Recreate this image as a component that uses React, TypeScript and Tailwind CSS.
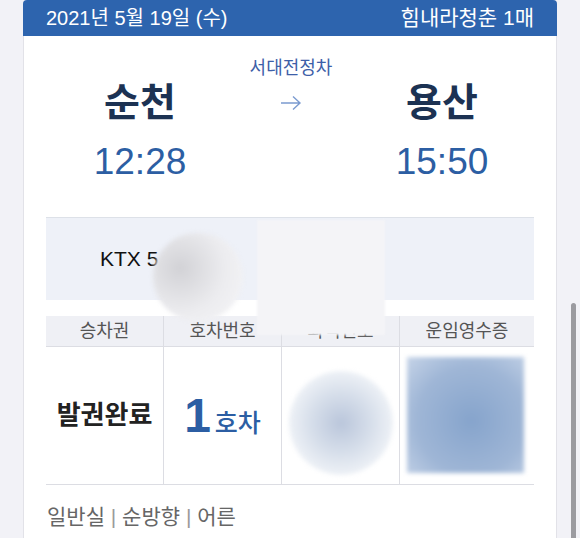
import { FC } from 'react';

const font = { fontFamily: '"Liberation Sans", "Noto Sans CJK KR", sans-serif' };

const App: FC = () => {
  return (
    <div
      className="relative h-[538px] w-[580px] overflow-hidden bg-[#f2f2f7]"
      style={font}
    >
      <div className="ml-[23px] h-[538px] w-[534px] rounded-t-[4px] border-x border-[#e2e2e8] bg-white">
        {/* date bar */}
        <div className="-mx-px flex h-[36px] items-center justify-between rounded-t-[4px] bg-[#2d64ae] px-[23px] text-[20px] text-white">
          <span>2021년 5월 19일 (수)</span>
          <span className="text-[21px]">힘내라청춘 1매</span>
        </div>

        {/* route */}
        <div className="pt-[20px]">
          <div className="flex justify-center pl-[2px]">
            <div className="w-[151px]" />
            <div className="w-[151px] text-center text-[18px] leading-[24px] text-[#3d60a8]">
              서대전정차
            </div>
            <div className="w-[151px]" />
          </div>
          <div className="flex justify-center pl-[2px]">
            <div className="w-[151px] text-center text-[39px] font-bold leading-[46px] text-[#1c3253]">
              순천
            </div>
            <div className="flex w-[151px] items-center justify-center">
              <svg width="22" height="16" viewBox="0 0 22 16" fill="none">
                <path
                  d="M1 8h19M13 1.5L20 8l-7 6.5"
                  stroke="#7b9bd0"
                  strokeWidth="1.4"
                />
              </svg>
            </div>
            <div className="w-[151px] text-center text-[39px] font-bold leading-[46px] text-[#1c3253]">
              용산
            </div>
          </div>
          <div className="mt-[16px] flex justify-center pl-[2px]">
            <div className="w-[151px] text-center text-[37px] leading-[40px] text-[#2c5ea3]">
              12:28
            </div>
            <div className="w-[151px]" />
            <div className="w-[151px] text-center text-[37px] leading-[40px] text-[#2c5ea3]">
              15:50
            </div>
          </div>
        </div>

        {/* train */}
        <div className="mx-[22px] mt-[35px] flex h-[83px] items-center border-t border-[#dde1e8] bg-[#eef1f8] pl-[54px] text-[21px] text-[#111]">
          KTX 5
        </div>

        {/* ticket table */}
        <div className="mx-[22px] mt-[16px]">
          <div className="grid h-[30px] grid-cols-[117px_118px_118px_1fr] bg-[#eff0f5] text-[18px] leading-[30px] text-[#555]">
            <div className="text-center">승차권</div>
            <div className="border-l border-[#dcdde3] text-center">호차번호</div>
            <div className="border-l border-[#dcdde3] text-center">좌석번호</div>
            <div className="border-l border-[#dcdde3] text-center">운임영수증</div>
          </div>
          <div className="grid h-[139px] grid-cols-[117px_118px_118px_1fr] border-y border-[#dcdde3]">
            <div className="flex items-center justify-center text-[26px] font-semibold text-[#222]">
              발권완료
            </div>
            <div className="flex items-center justify-center border-l border-[#dcdde3] text-[#2c5ea3]">
              <span className="flex items-baseline">
                <span className="text-[48px] font-bold leading-none">1</span>
                <span className="ml-[4px] text-[25px] font-medium leading-none">호차</span>
              </span>
            </div>
            <div className="border-l border-[#dcdde3]" />
            <div className="border-l border-[#dcdde3]" />
          </div>
        </div>

        <div className="mx-[23px] mt-[20px] text-[21px] leading-[24px] text-[#666]">
          일반실 <span className="text-[#9a9a9a]">|</span> 순방향{' '}
          <span className="text-[#9a9a9a]">|</span> 어른
        </div>
      </div>

      {/* privacy blurs */}
      <div className="absolute left-[153px] top-[233px] h-[88px] w-[90px] rounded-full bg-[radial-gradient(circle_at_30%_40%,#d2d2d6,#ececef_55%,#f6f6f8)] blur-[2px]" />
      <div className="absolute left-[257px] top-[220px] h-[115px] w-[128px] bg-[#f4f4f7] blur-[1px]" />
      <div className="absolute left-[289px] top-[371px] h-[104px] w-[104px] rounded-full bg-[radial-gradient(circle_at_50%_50%,#bac6db,#d6deea_40%,#f1f4f8_75%,#fbfcfd)] blur-[2px]" />
      <div className="absolute left-[407px] top-[357px] h-[116px] w-[117px] bg-[radial-gradient(ellipse_at_55%_55%,#86a4cc,#9fb6d6_60%,#c6d4e8)] blur-[2px]" />

      {/* scrollbar */}
      <div className="absolute left-[571px] top-[303px] h-[240px] w-[5px] rounded-full bg-[#9b9ba0]" />
    </div>
  );
};

export default App;
